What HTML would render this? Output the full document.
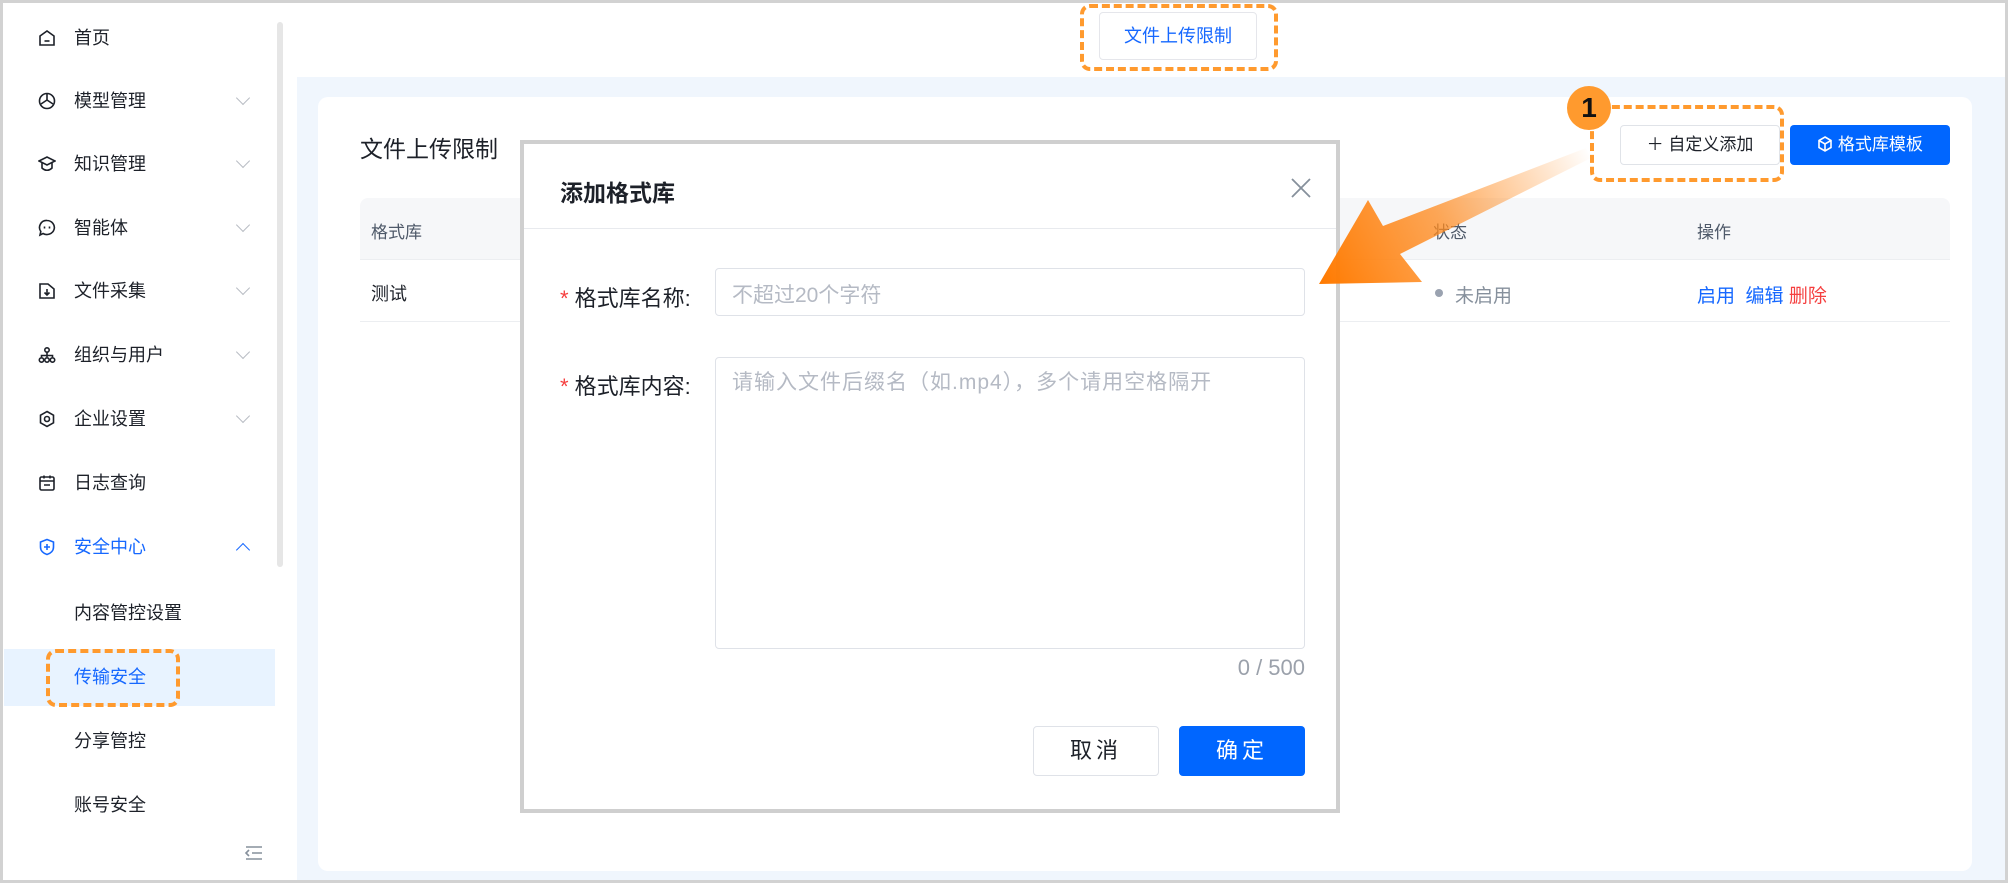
<!DOCTYPE html>
<html><head><meta charset="utf-8">
<style>
*{box-sizing:border-box;margin:0;padding:0}
html,body{width:2008px;height:883px;overflow:hidden;background:#fff;font-family:"Liberation Sans","Noto Sans CJK SC",sans-serif;color:#1d2129}
.frame{position:absolute;left:0;top:0;width:2008px;height:883px;border:3px solid #d2d2d2;z-index:50;pointer-events:none}
.abs{position:absolute}
.side{left:0;top:0;width:280px;height:883px;background:#fff}
.item{position:absolute;left:0;width:280px;height:40px;font-size:18px;line-height:40px;color:#1d2129}
.item .ic{position:absolute;left:38px;top:11px;width:18px;height:18px}
.item .tx{position:absolute;left:74px}
.item .ch{position:absolute;left:238px;top:12px;width:10px;height:10px;border-right:1.3px solid #b8bcc4;border-bottom:1.3px solid #b8bcc4;transform:rotate(45deg)}
.dash{position:absolute;border:4px dashed #ff9a2e;border-radius:10px}
.main{left:297px;top:77px;width:1711px;height:806px;background:#f0f6fd}
.card{left:318px;top:97px;width:1654px;height:774px;background:#fff;border-radius:10px}
.th{font-size:17px;color:#4e5969}
</style></head><body>
<div class="frame"></div>
<div class="abs side">
 <div class="abs" style="left:277px;top:22px;width:6px;height:545px;background:#e6e6e6;border-radius:3px"></div>
 <div class="item" style="top:18px"><svg class="ic" viewBox="0 0 18 18" fill="none" stroke="#1d2129" stroke-width="1.6"><path d="M2 7l7-5 7 5v9H2z"/><path d="M6.5 12h5"/></svg><span class="tx">首页</span></div>
 <div class="item" style="top:81px"><svg class="ic" viewBox="0 0 18 18" fill="none" stroke="#1d2129" stroke-width="1.6"><circle cx="9" cy="9" r="7.5"/><path d="M9 2v6l-6 4M9 8l6 4"/></svg><span class="tx">模型管理</span><span class="ch"></span></div>
 <div class="item" style="top:144px"><svg class="ic" viewBox="0 0 18 18" fill="none" stroke="#1d2129" stroke-width="1.6"><path d="M1 6l8-4 8 4-8 4z"/><path d="M4 8v5c3 3 7 3 10 0V8"/></svg><span class="tx">知识管理</span><span class="ch"></span></div>
 <div class="item" style="top:208px"><svg class="ic" viewBox="0 0 18 18" fill="none" stroke="#1d2129" stroke-width="1.6"><path d="M9 1.5a7.5 7 0 1 1-4 13L2 16l.8-3.5A7 7 0 0 1 9 1.5z"/><path d="M6.5 7.5v2M11.5 7.5v2"/></svg><span class="tx">智能体</span><span class="ch"></span></div>
 <div class="item" style="top:271px"><svg class="ic" viewBox="0 0 18 18" fill="none" stroke="#1d2129" stroke-width="1.6"><path d="M2 2h8l6 5v9H2z"/><path d="M9 7v6M6.5 10.5L9 13l2.5-2.5"/></svg><span class="tx">文件采集</span><span class="ch"></span></div>
 <div class="item" style="top:335px"><svg class="ic" viewBox="0 0 18 18" fill="none" stroke="#1d2129" stroke-width="1.6"><circle cx="9" cy="4" r="2.2"/><circle cx="3.5" cy="14" r="2.2"/><circle cx="9" cy="14" r="2.2"/><circle cx="14.5" cy="14" r="2.2"/><path d="M9 6v5M3.5 11V9.5h11V11"/></svg><span class="tx">组织与用户</span><span class="ch"></span></div>
 <div class="item" style="top:399px"><svg class="ic" viewBox="0 0 18 18" fill="none" stroke="#1d2129" stroke-width="1.6"><path d="M9 1.5l6.5 3.7v7.6L9 16.5l-6.5-3.7V5.2z"/><circle cx="9" cy="9" r="2.5"/></svg><span class="tx">企业设置</span><span class="ch"></span></div>
 <div class="item" style="top:463px"><svg class="ic" viewBox="0 0 18 18" fill="none" stroke="#1d2129" stroke-width="1.6"><rect x="2" y="3" width="14" height="13" rx="1.5"/><path d="M2 7h14M6 1.5v3M12 1.5v3M6 11h6"/></svg><span class="tx">日志查询</span></div>
 <div class="item" style="top:527px;color:#1668ff"><svg class="ic" viewBox="0 0 18 18" fill="none" stroke="#1668ff" stroke-width="1.6"><path d="M9 1.5l6.5 2.5v5c0 4-3 6.5-6.5 7.5C5.5 15.5 2.5 13 2.5 9V4z"/><path d="M9 6v6M6 9h6"/></svg><span class="tx">安全中心</span><span class="ch" style="transform:rotate(225deg);top:18px;border-color:#1668ff"></span></div>
 <div class="item" style="top:593px"><span class="tx">内容管控设置</span></div>
 <div class="abs" style="left:4px;top:649px;width:271px;height:57px;background:#e8f3ff"></div>
 <div class="item" style="top:657px;color:#1668ff"><span class="tx">传输安全</span></div>
 <div class="dash" style="left:46px;top:649px;width:134px;height:58px"></div>
 <div class="item" style="top:721px"><span class="tx">分享管控</span></div>
 <div class="item" style="top:785px"><span class="tx">账号安全</span></div>
 <svg class="abs" style="left:244px;top:845px" width="20" height="16" viewBox="0 0 20 16" fill="none" stroke="#86909c" stroke-width="1.6"><path d="M2 2h16M8 8h10M2 14h16M5 5l-3 3 3 3"/></svg>
</div>
<div class="abs" style="left:1099px;top:12px;width:158px;height:48px;border:1px solid #e5e6eb;border-radius:4px;color:#1668ff;font-size:18px;line-height:46px;text-align:center;background:#fff">文件上传限制</div>
<div class="dash" style="left:1080px;top:4px;width:198px;height:67px"></div>
<div class="abs main"></div>
<div class="abs card">
 <div class="abs" style="left:42px;top:33px;font-size:23px;color:#1d2129">文件上传限制</div>
 <div class="abs" style="left:42px;top:101px;width:1590px;height:62px;background:#f6f7f9;border-radius:8px 8px 0 0;border-bottom:1px solid #eceef1"></div>
 <div class="abs th" style="left:53px;top:121px">格式库</div>
 <div class="abs th" style="left:1115px;top:121px">状态</div>
 <div class="abs th" style="left:1379px;top:121px">操作</div>
 <div class="abs" style="left:53px;top:183px;font-size:18px">测试</div>
 <div class="abs" style="left:42px;top:224px;width:1590px;height:1px;background:#eceef1"></div>
 <div class="abs" style="left:1117px;top:192px;width:8px;height:8px;border-radius:50%;background:#9aa2b0"></div>
 <div class="abs" style="left:1137px;top:184px;font-size:19px;color:#86909c">未启用</div>
 <div class="abs" style="left:1379px;top:184px;font-size:19px;color:#1668ff">启用 &nbsp;编辑 <span style="color:#f53f3f">删除</span></div>
 <div class="abs" style="left:1302px;top:28px;width:160px;height:40px;border:1px solid #e0e3e8;border-radius:4px;font-size:17px;line-height:38px;text-align:center;background:#fff">＋ 自定义添加</div>
 <div class="abs" style="left:1472px;top:28px;width:160px;height:40px;border-radius:4px;background:#0066ff;color:#fff;font-size:17px;line-height:40px;text-align:center"><svg width="16" height="16" viewBox="0 0 16 16" fill="none" stroke="#fff" stroke-width="1.6" style="vertical-align:-2px"><path d="M8 1l6 3.5v7L8 15l-6-3.5v-7zM2 4.5L8 8l6-3.5M8 8v7"/></svg> 格式库模板</div>
</div>
<div class="dash" style="left:1590px;top:105px;width:194px;height:77px"></div>
<div class="abs" style="left:1567px;top:86px;width:44px;height:44px;border-radius:50%;background:#ff9a2e;color:#111;font-weight:bold;font-size:28px;line-height:44px;text-align:center;z-index:5">1</div>
<div class="abs" style="left:520px;top:140px;width:820px;height:673px;background:#fff;border:4px solid #cfcfcf;z-index:10">
 <div class="abs" style="left:36px;top:30px;font-size:23px;font-weight:bold;color:#1d2129">添加格式库</div>
 <svg class="abs" style="left:766px;top:33px" width="22" height="22" viewBox="0 0 22 22" stroke="#86909c" stroke-width="1.8"><path d="M2 2l18 18M20 2L2 20"/></svg>
 <div class="abs" style="left:0;top:84px;width:812px;height:1px;background:#e8eaee"></div>
 <div class="abs" style="left:36px;top:137px;font-size:22px"><span style="color:#f53f3f">*</span> 格式库名称:</div>
 <div class="abs" style="left:191px;top:124px;width:590px;height:48px;border:1px solid #dfe2e8;border-radius:4px;font-size:21px;color:#b5bac4;padding:10px 16px">不超过20个字符</div>
 <div class="abs" style="left:36px;top:225px;font-size:22px"><span style="color:#f53f3f">*</span> 格式库内容:</div>
 <div class="abs" style="left:191px;top:213px;width:590px;height:292px;border:1px solid #dfe2e8;border-radius:4px;font-size:21px;letter-spacing:1px;color:#b5bac4;padding:8px 16px">请输入文件后缀名（如.mp4），多个请用空格隔开</div>
 <div class="abs" style="left:600px;top:511px;width:181px;text-align:right;font-size:22px;color:#9ba1ab">0 / 500</div>
 <div class="abs" style="left:509px;top:582px;width:126px;height:50px;border:1px solid #dfe2e8;border-radius:4px;font-size:22px;line-height:48px;text-align:center;letter-spacing:4px">取消</div>
 <div class="abs" style="left:655px;top:582px;width:126px;height:50px;background:#0066ff;border-radius:4px;font-size:22px;line-height:50px;text-align:center;color:#fff;letter-spacing:4px">确定</div>
</div>
<svg class="abs" style="left:0;top:0;z-index:20" width="2008" height="883">
 <defs><linearGradient id="g" x1="1590" y1="152" x2="1320" y2="284" gradientUnits="userSpaceOnUse"><stop offset="0" stop-color="#ff8a1e" stop-opacity="0"/><stop offset="0.55" stop-color="#ff8a1e" stop-opacity="0.75"/><stop offset="1" stop-color="#ff7a00"/></linearGradient></defs>
 <polygon fill="url(#g)" points="1319,284 1368,200 1383,226 1586,148 1591,158 1400,254 1422,282"/>
</svg>
</body></html>
